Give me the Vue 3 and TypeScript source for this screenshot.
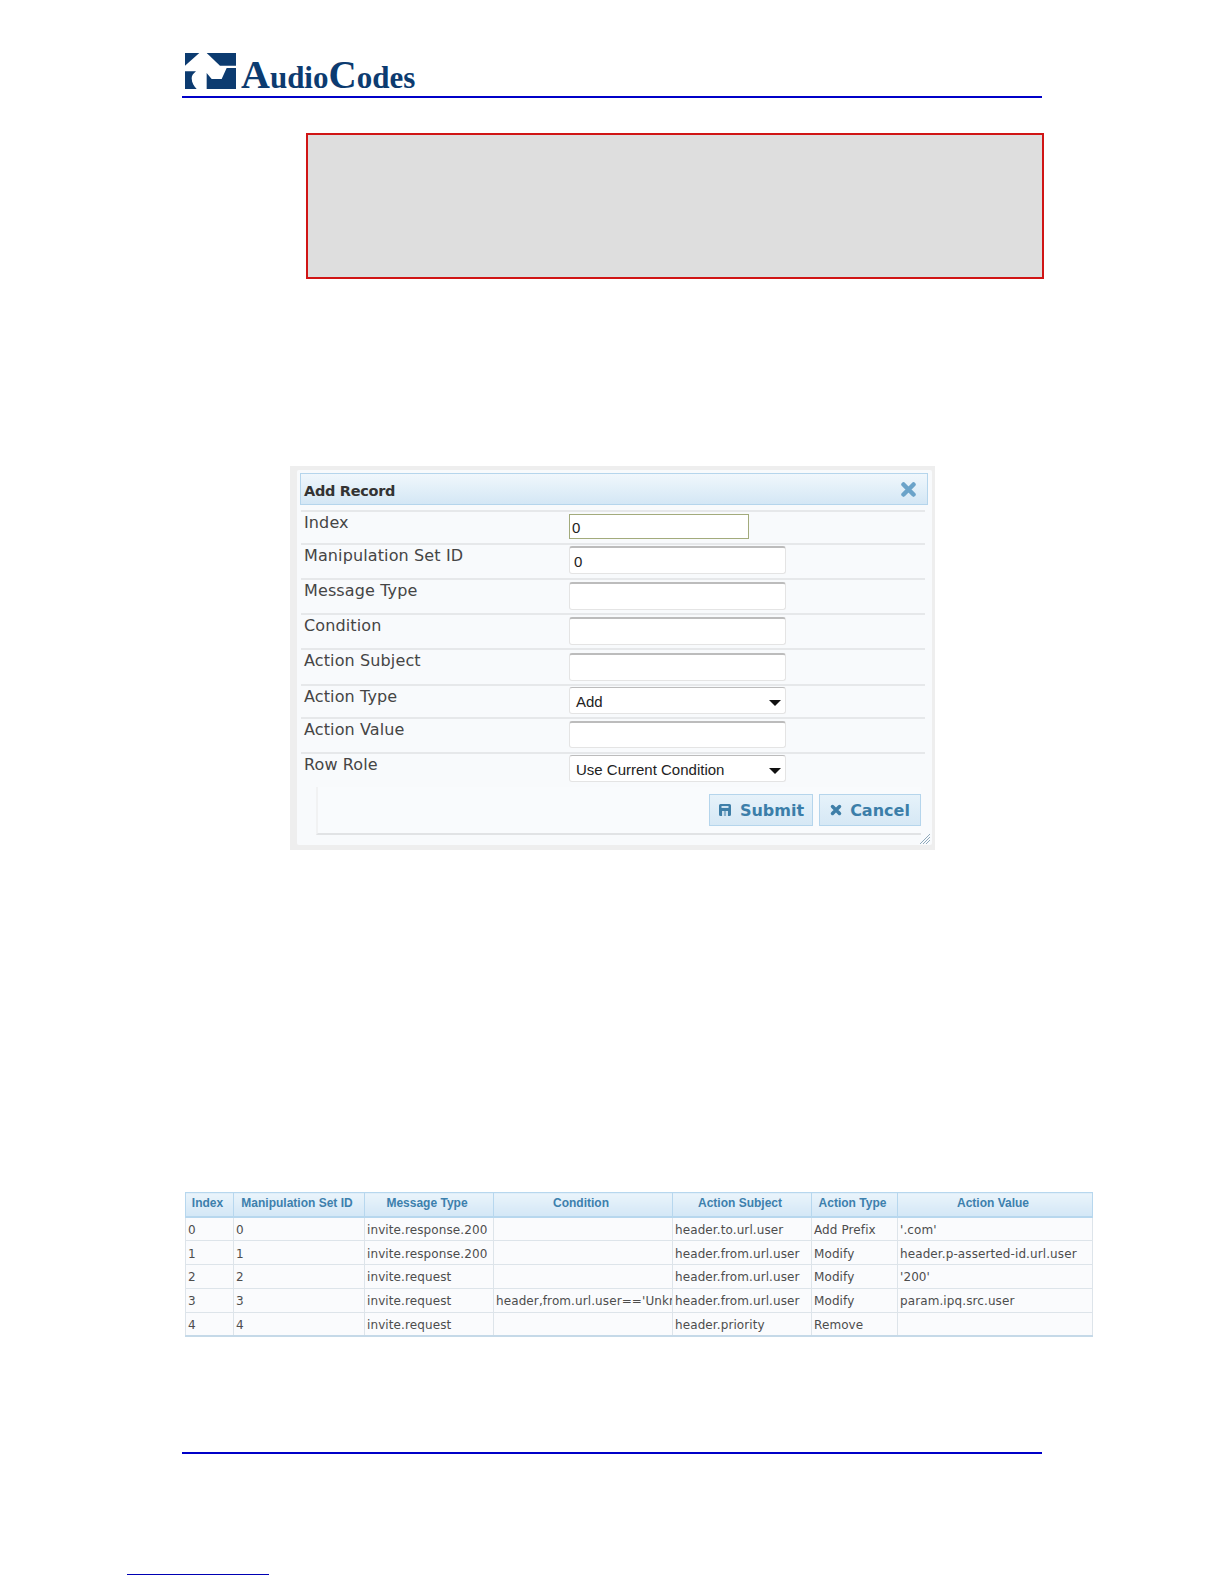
<script setup lang="ts">
interface Field { label: string; value: string; kind: 'focus' | 'text' | 'select'; height: number; ctlH: number; ctlTop: number }
const fields: Field[] = [
  { label: 'Index', value: '0', kind: 'focus', height: 33, ctlH: 25, ctlTop: 2 },
  { label: 'Manipulation Set ID', value: '0', kind: 'text', height: 35, ctlH: 28, ctlTop: 1 },
  { label: 'Message Type', value: '', kind: 'text', height: 35, ctlH: 28, ctlTop: 2 },
  { label: 'Condition', value: '', kind: 'text', height: 35, ctlH: 28, ctlTop: 2 },
  { label: 'Action Subject', value: '', kind: 'text', height: 36, ctlH: 28, ctlTop: 3 },
  { label: 'Action Type', value: 'Add', kind: 'select', height: 33, ctlH: 27, ctlTop: 1 },
  { label: 'Action Value', value: '', kind: 'text', height: 35, ctlH: 27, ctlTop: 2 },
  { label: 'Row Role', value: 'Use Current Condition', kind: 'select', height: 35, ctlH: 27, ctlTop: 1 },
]
const cols = [48, 131, 129, 179, 139, 86, 195]
const heads = ['Index', 'Manipulation Set ID', 'Message Type', 'Condition', 'Action Subject', 'Action Type', 'Action Value']
const rows: string[][] = [
  ['0', '0', 'invite.response.200', '', 'header.to.url.user', 'Add Prefix', "'.com'"],
  ['1', '1', 'invite.response.200', '', 'header.from.url.user', 'Modify', 'header.p-asserted-id.url.user'],
  ['2', '2', 'invite.request', '', 'header.from.url.user', 'Modify', "'200'"],
  ['3', '3', 'invite.request', "header,from.url.user=='Unkr", 'header.from.url.user', 'Modify', 'param.ipq.src.user'],
  ['4', '4', 'invite.request', '', 'header.priority', 'Remove', ''],
]
</script>

<template>
  <div class="page">
    <header class="top">
      <div class="brand">
        <svg class="mark" viewBox="45 40 153 108" width="51" height="36" aria-hidden="true">
          <path fill="#0c3b70" d="M45 40H88L45 78Z" />
          <path fill="#0c3b70" d="M110 40H198V78H150Z" />
          <path fill="#0c3b70" d="M198 85V148H110V100L125 118H155L170 85Z" />
          <path fill="#0c3b70" d="M45 95H78C70 102 65 108 65 116C65 130 72 140 80 148H45Z" />
        </svg>
        <span class="word"><span class="cap-a">A</span>udio<span class="cap-c">C</span>odes</span>
      </div>
    </header>

    <div class="note"></div>

    <section class="dialog">
      <div class="panel">
        <div class="title">
          <span class="title-text">Add Record</span>
          <svg width="15" height="15" viewBox="0 0 15 15" aria-hidden="true">
            <path d="M2.500 2.500L12.500 12.500M12.500 2.500L2.500 12.500" stroke="#6ba3c9" stroke-width="4.500" stroke-linecap="round" />
          </svg>
        </div>
        <div class="form">
          <div v-for="f in fields" :key="f.label" class="field" :style="{ height: f.height + 'px' }">
            <div class="label">{{ f.label }}</div>
            <div
              class="control"
              :class="f.kind"
              :style="{ height: f.ctlH + 'px', marginTop: f.ctlTop + 'px' }"
            >
              <span>{{ f.value }}</span>
              <i v-if="f.kind === 'select'" class="caret"></i>
            </div>
          </div>
        </div>
        <div class="actions">
          <button class="btn submit" type="button">
            <svg width="14" height="14" viewBox="0 0 14 14" aria-hidden="true">
              <path fill="#3f7fa8" d="M2.500 1H11.500A1.500 1.500 0 0 1 13 2.500V11.500A1.500 1.500 0 0 1 11.500 13H2.500A1.500 1.500 0 0 1 1 11.500V2.500A1.500 1.500 0 0 1 2.500 1Z" />
              <path fill="#cfe3f1" d="M3.500 3H10.500V5H3.500ZM4 8H10V13H4Z" />
              <path fill="#3f7fa8" d="M6.500 8H7.500V13H6.500Z" />
            </svg>
            Submit
          </button>
          <button class="btn cancel" type="button">
            <svg width="12" height="12" viewBox="0 0 12 12" aria-hidden="true">
              <path d="M2.500 2.500L9.500 9.500M9.500 2.500L2.500 9.500" stroke="#3f7fa8" stroke-width="3.500" stroke-linecap="round" />
            </svg>
            Cancel
          </button>
        </div>
      </div>
      <svg class="grip" width="12" height="12" viewBox="0 0 12 12" aria-hidden="true">
        <path d="M11 1L1 11M11 4L4 11M11 7L7 11" stroke="#8fa9bb" stroke-width="1" />
      </svg>
    </section>

    <table class="grid">
      <colgroup>
        <col v-for="(c, i) in cols" :key="i" :style="{ width: c + 'px' }" />
      </colgroup>
      <thead>
        <tr>
          <th v-for="h in heads" :key="h">{{ h }}</th>
        </tr>
      </thead>
      <tbody>
        <tr v-for="r in rows" :key="r[0]">
          <td v-for="(c, i) in r" :key="i">{{ c }}</td>
        </tr>
      </tbody>
    </table>

    <div class="rule-bottom"></div>
    <div class="footnote-rule"></div>
  </div>
</template>

<style>
html, body { margin: 0; background: #fff; }
</style>

<style scoped>
.page {
  width: 1224px;
  height: 1584px;
  overflow: hidden;
  background: #fff;
  display: flex;
  flex-direction: column;
  padding-top: 53px;
  box-sizing: border-box;
}
.top {
  width: 860px;
  height: 45px;
  margin-left: 182px;
  border-bottom: 2px solid #0000c8;
  box-sizing: border-box;
  flex: none;
}
.brand { display: flex; align-items: flex-start; padding-left: 3px; height: 43px; }
.mark { display: block; flex: none; }
.word {
  margin-left: 5px;
  margin-top: 4px;
  font: bold 31px/36px "Liberation Serif", serif;
  color: #0c3b70;
  white-space: nowrap;
}
.cap-a { font-size: 40px; }
.cap-c { font-size: 39px; }
.note {
  width: 738px;
  height: 146px;
  margin: 35px 0 0 306px;
  box-sizing: border-box;
  background: #dedede;
  border: 2px solid #d01515;
  flex: none;
}
.dialog {
  position: relative;
  width: 645px;
  height: 384px;
  margin: 187px 0 0 290px;
  padding: 4px 3px 5px 7px;
  box-sizing: border-box;
  background: #eeeeee;
  flex: none;
}
.panel {
  height: 100%;
  box-sizing: border-box;
  padding: 3px 4px 0 3px;
  background: #f8fafc;
  border-radius: 2px;
}
.title {
  height: 32px;
  box-sizing: border-box;
  display: flex;
  align-items: center;
  justify-content: space-between;
  padding: 0 11px 0 3px;
  background: linear-gradient(#f0f7fc, #d4e7f5);
  border: 1px solid #b5d5ec;
  font: bold 14.5px "DejaVu Sans", sans-serif;
  letter-spacing: -0.3px;
  color: #333;
}
.title-text { padding-top: 3px; }
.form { margin: 5px 3px 0 1px; }
.field {
  display: flex;
  align-items: flex-start;
  box-sizing: border-box;
  border-top: 2px solid #e6e8ea;
}
.label {
  width: 268px;
  padding: 0 0 0 3px;
  box-sizing: border-box;
  flex: none;
  font: 16px/22px "DejaVu Sans", sans-serif;
  letter-spacing: 0.12px;
  color: #454545;
}
.control {
  width: 217px;
  box-sizing: border-box;
  display: flex;
  align-items: center;
  justify-content: space-between;
  padding: 2px 4px 0 4px;
  background: #fff;
  border: 1px solid #e4e4e4;
  border-top: 2px solid #bcbcbc;
  border-radius: 3px;
  font: 15px "Liberation Sans", sans-serif;
  color: #222;
}
.control.focus {
  width: 180px;
  padding-left: 2px;
  border: 1px solid #a3ab7c;
  border-radius: 0;
}
.control.select { padding-left: 6px; border-top-width: 1px; }
.caret {
  width: 0;
  height: 0;
  border-left: 6px solid transparent;
  border-right: 6px solid transparent;
  border-top: 6px solid #111;
  margin-top: 2px;
}
.actions {
  display: flex;
  justify-content: flex-end;
  gap: 6px;
  height: 48px;
  margin: 0 7px 0 16px;
  padding-top: 7px;
  box-sizing: border-box;
  background: #f9fbfd;
  border-bottom: 2px solid #e1e3e5;
  border-left: 2px solid #f1f2f3;
}
.btn {
  height: 32px;
  display: flex;
  align-items: center;
  justify-content: center;
  gap: 8px;
  padding: 0;
  background: linear-gradient(#e6f2fa, #d6e8f5);
  border: 1px solid #b5d5ec;
  font: bold 16px "DejaVu Sans", sans-serif;
  color: #3b7ea9;
  box-sizing: border-box;
}
.submit { width: 104px; }
.cancel { width: 102px; }
.grip { position: absolute; right: 4px; bottom: 5px; }
.grid {
  width: 907px;
  margin: 342px 0 0 185px;
  table-layout: fixed;
  border-collapse: collapse;
  flex: none;
  font-family: "DejaVu Sans", sans-serif;
}
.grid th {
  height: 24.5px;
  padding: 0 4px 3px 0;
  box-sizing: border-box;
  background: linear-gradient(#eaf4fb, #d3e7f6);
  border: 1px solid #b7d7ee;
  border-bottom-width: 2px;
  font: bold 12px "Liberation Sans", sans-serif;
  text-align: center;
  white-space: nowrap;
  overflow: hidden;
  color: #3d80ad;
}
.grid td {
  height: 23.8px;
  padding: 2px 0 0 2px;
  box-sizing: border-box;
  background: #fafbfd;
  border: 1px solid #dde4ea;
  font-size: 12px;
  letter-spacing: 0.1px;
  white-space: nowrap;
  overflow: hidden;
  color: #4d4d4d;
}
.grid tbody tr:last-child td { border-bottom: 2px solid #c5d9e8; }
.rule-bottom {
  width: 860px;
  height: 2px;
  margin: 115px 0 0 182px;
  background: #0000c8;
  flex: none;
}
.footnote-rule {
  width: 142px;
  height: 1px;
  margin: 120px 0 0 127px;
  background: #0000b4;
  flex: none;
}
</style>
